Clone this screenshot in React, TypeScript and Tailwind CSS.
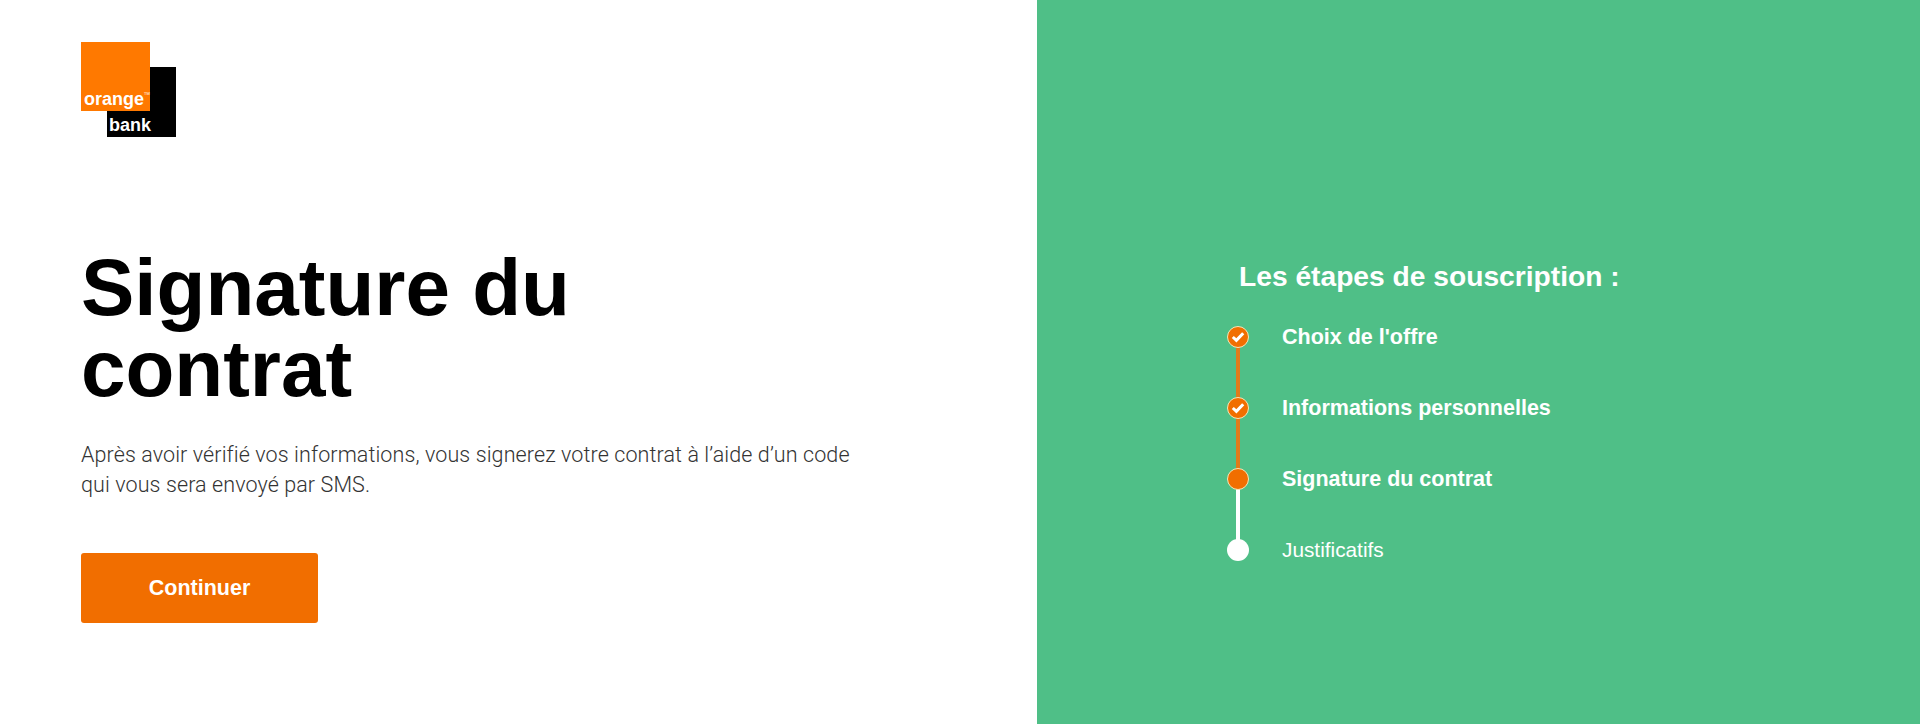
import React from "react";

const steps = [
  { label: "Choix de l'offre", state: "done" },
  { label: "Informations personnelles", state: "done" },
  { label: "Signature du contrat", state: "current" },
  { label: "Justificatifs", state: "todo" },
];

function Logo() {
  return (
    <div className="relative h-[95px] w-[95px]">
      <div className="absolute left-[26px] top-[25px] flex h-[70px] w-[69px] items-end bg-black pb-[2px] pl-[2px]">
        <span className="text-[18px] font-bold leading-[20px] text-white">bank</span>
      </div>
      <div className="absolute left-0 top-0 flex h-[69px] w-[69px] items-end bg-[#ff7900] pb-[2px] pl-[3px]">
        <span className="text-[18px] font-bold leading-[20px] text-white">orange</span>
        <span className="mb-[13px] text-[4px] leading-none text-white">TM</span>
      </div>
    </div>
  );
}

function StepDot({ state }: { state: string }) {
  if (state === "todo") {
    return <div className="h-[22px] w-[22px] rounded-full bg-white" />;
  }
  return (
    <div className="flex h-[22px] w-[22px] items-center justify-center rounded-full border border-[#f5e6b8] bg-[#f16e00]">
      {state === "done" && (
        <svg width="14" height="12" viewBox="0 0 14 12" fill="none">
          <path d="M1.8 6 L5.4 9.4 L12.2 2.2" stroke="white" strokeWidth="3" />
        </svg>
      )}
    </div>
  );
}

export default function App() {
  return (
    <div className="flex h-[724px] w-full bg-white font-['Liberation_Sans',sans-serif]">
      <div className="flex-1 pl-[81px] pt-[42px]">
        <Logo />
        <h1 className="mt-[110px] w-[600px] text-[80px] font-bold leading-[81px] text-black">
          Signature du contrat
        </h1>
        <p className="mt-[31px] w-[790px] font-['Roboto',sans-serif] text-[21.5px] font-light leading-[30px] tracking-[0.1px] text-[#333]">
          Après avoir vérifié vos informations, vous signerez votre contrat à l’aide d’un code
          <br />
          qui vous sera envoyé par SMS.
        </p>
        <button className="mt-[53px] h-[70px] w-[237px] rounded-[3px] bg-[#f16e00] text-[21.5px] font-bold text-white">
          Continuer
        </button>
      </div>
      <div className="flex w-[883px] flex-col bg-[#4fbf87] pl-[202px] pt-[260px]">
        <h2 className="text-[28.2px] font-bold leading-[32px] text-white">Les étapes de souscription :</h2>
        <ul className="mt-[34px]">
          {steps.map((s, i) => (
            <li key={s.label} className="relative flex h-[71px] items-start">
              {i < steps.length - 1 && (
                <div className={`absolute left-[-3px] top-[11px] h-[71px] w-[4px] ${s.state === "done" ? "bg-[#e07b1a]" : "bg-white"}`} />
              )}
              <div className="relative ml-[-12px]">
                <StepDot state={s.state} />
              </div>
              <span className={`ml-[33px] leading-[22px] text-white ${s.state === "todo" ? "text-[20.8px] font-normal" : "text-[21.5px] font-bold"}`}>
                {s.label}
              </span>
            </li>
          ))}
        </ul>
      </div>
    </div>
  );
}
